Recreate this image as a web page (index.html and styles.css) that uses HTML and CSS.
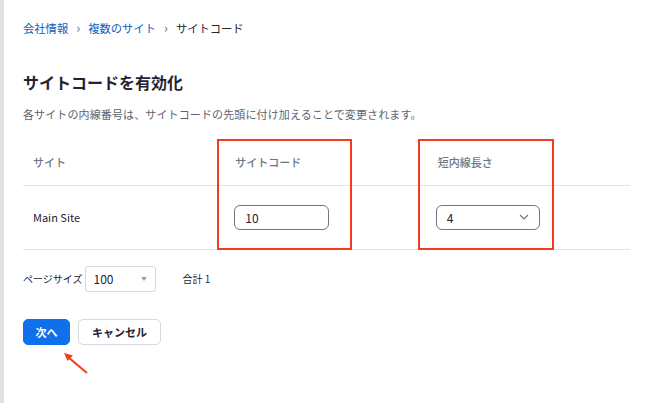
FILE: index.html
```html
<!DOCTYPE html>
<html lang="ja">
  <head>
    <meta charset="UTF-8" />
    <title>サイトコード</title>
    <link rel="stylesheet" href="styles.css">
  </head>
  <body>
    <div class="page">
      <nav class="crumbs">
        <a href="#">会社情報</a>
        <span class="sep">&rsaquo;</span>
        <a href="#">複数のサイト</a>
        <span class="sep">&rsaquo;</span>
        <span class="current">サイトコード</span>
      </nav>

      <h1 class="title">サイトコードを有効化</h1>
      <p class="desc">各サイトの内線番号は、サイトコードの先頭に付け加えることで変更されます。</p>

      <div class="table-wrap">
        <table class="sites">
          <thead>
            <tr>
              <th>サイト</th>
              <th>サイトコード</th>
              <th>短内線長さ</th>
            </tr>
          </thead>
          <tbody>
            <tr>
              <td>Main Site</td>
              <td><input class="code-input" type="text" value="10"></td>
              <td>
                <div class="select">
                  <span>4</span>
                  <svg width="10" height="6" viewBox="0 0 10 6"><path d="M1 1l4 4 4-4" fill="none" stroke="#6e7680" stroke-width="1.2"/></svg>
                </div>
              </td>
            </tr>
          </tbody>
        </table>
        <!-- 注釈の赤枠 -->
        <div class="mark mark-code"></div>
        <div class="mark mark-len"></div>
      </div>

      <div class="pager">
        <span class="pager-label">ページサイズ</span>
        <div class="page-size">
          <span>100</span>
          <svg width="6" height="4" viewBox="0 0 6 4"><path d="M0 0h6L3 4z" fill="#9aa0a6"/></svg>
        </div>
        <span class="total">合計 1</span>
      </div>

      <div class="actions">
        <button class="btn btn-primary">次へ</button>
        <button class="btn">キャンセル</button>
        <svg class="arrow" width="30" height="26" viewBox="0 0 30 26">
          <path d="M26 23L7 7" stroke="#f0401e" stroke-width="2" fill="none"/>
          <path d="M3 3l9 2.5-5.5 5.5z" fill="#f0401e"/>
        </svg>
      </div>
    </div>
  </body>
</html>
```

FILE: styles.css
```css
* {
  box-sizing: border-box;
}

body {
  margin: 0;
  background: #fff;
  font-family: "Noto Sans CJK JP", "Noto Sans", sans-serif;
  color: #232333;
}

.page {
  min-height: 403px;
  border-left: 4px solid #e1e1e1;
  padding: 18px 15px 0 19px;
}

.crumbs {
  font-size: 11.3px;
  line-height: 20px;
  display: flex;
  align-items: center;
}

.crumbs a {
  color: #0e5db8;
  text-decoration: none;
}

.crumbs .sep {
  color: #6e7680;
  margin: 0 8px;
  font-size: 13px;
}

.crumbs .current {
  color: #232333;
}

.title {
  margin: 32px 0 0;
  font-size: 16px;
  line-height: 24px;
  font-weight: 700;
}

.desc {
  margin: 12px 0 0;
  font-size: 11px;
  line-height: 16px;
  letter-spacing: 0.12px;
  color: #5d6470;
}

.table-wrap {
  position: relative;
  margin-top: 18px;
}

.sites {
  width: 607px;
  border-collapse: collapse;
  table-layout: fixed;
}

.sites th,
.sites td {
  text-align: left;
  padding: 0 0 0 10px;
  border-bottom: 1px solid #e4e4e4;
}

.sites th {
  height: 45px;
  font-size: 11px;
  font-weight: 500;
  color: #6e7680;
}

.sites td {
  height: 64px;
  font-size: 11px;
  color: #232333;
}

.code-input {
  width: 95px;
  height: 25px;
  margin-left: -1px;
  border: 1px solid #6e7680;
  border-radius: 6px;
  padding: 0 10px;
  font: 12px "Noto Sans CJK JP", sans-serif;
  color: #232333;
}

.select {
  width: 104px;
  height: 25px;
  margin-left: -2px;
  border: 1px solid #6e7680;
  border-radius: 6px;
  padding: 0 10px 0 10px;
  display: flex;
  align-items: center;
  justify-content: space-between;
  font-size: 12px;
}

.mark {
  position: absolute;
  top: -1px;
  height: 111px;
  border: 2px solid #f23b1f;
}

.mark-code {
  left: 194px;
  width: 135px;
}

.mark-len {
  left: 395px;
  width: 136px;
}

.pager {
  display: flex;
  align-items: center;
  margin-top: 16px;
  font-size: 10px;
  color: #232333;
}

.page-size {
  width: 71px;
  height: 26px;
  margin-left: 2px;
  border: 1px solid #d6d6d6;
  border-radius: 3px;
  padding: 0 8px;
  display: flex;
  align-items: center;
  justify-content: space-between;
  font-size: 12px;
}

.total {
  margin-left: 27px;
}

.actions {
  position: relative;
  display: flex;
  gap: 8px;
  margin-top: 27px;
}

.btn {
  height: 26px;
  padding: 0 13px;
  border: 1px solid #d6d9de;
  border-radius: 5px;
  background: #fff;
  color: #232333;
  font: 700 11px "Noto Sans CJK JP", sans-serif;
}

.btn-primary {
  width: 47px;
  padding: 0;
  background: #0e71eb;
  border-color: #0e71eb;
  color: #fff;
}

.actions .arrow {
  position: absolute;
  left: 38px;
  top: 31px;
}
```
